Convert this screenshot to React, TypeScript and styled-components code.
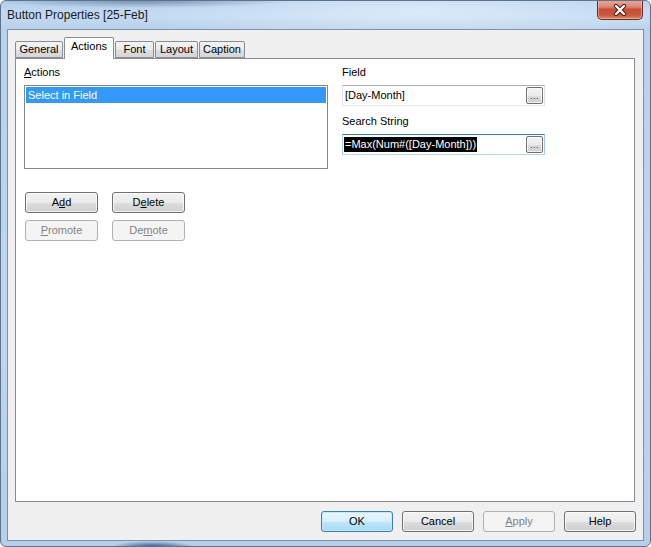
import React from "react";
import styled, { createGlobalStyle } from "styled-components";

const Global = createGlobalStyle`
  html, body { margin: 0; padding: 0; background: #ffffff; }
  body { font-family: "Liberation Sans", Arial, sans-serif; font-size: 11px; color: #000; }
  * { box-sizing: border-box; }
`;

const Window = styled.div`
  width: 651px;
  height: 547px;
  display: flex;
  flex-direction: column;
  border-radius: 6px;
  border: 1px solid #5f7289;
  background:
    radial-gradient(ellipse 150px 7px at 140px 0px, rgba(70, 95, 130, 0.55), transparent),
    radial-gradient(ellipse 42px 6px at 152px 546px, rgba(25, 65, 125, 0.9), transparent),
    radial-gradient(ellipse 300px 30px at 420px 10px, rgba(230, 242, 252, 0.7), transparent),
    linear-gradient(180deg, #b6d0ec 0%, #c2d9f1 14px, #b9d2ec 28px, #bed6ef 60%, #b6cfea 100%);
  overflow: hidden;
`;

const TitleBar = styled.div`
  height: 28px;
  flex: none;
  display: flex;
  justify-content: space-between;
  align-items: flex-start;
  padding-left: 6px;
`;

const Title = styled.div`
  font-family: "Liberation Sans", Arial, sans-serif;
  font-size: 12px;
  color: #1b1b1b;
  padding-top: 7px;
  line-height: 14px;
`;

const CloseButton = styled.div`
  width: 46px;
  height: 20px;
  margin-right: 7px;
  margin-top: -1px;
  border: 1px solid #6b2a20;
  border-top: none;
  border-radius: 0 0 5px 5px;
  background: linear-gradient(180deg, #e9a99a 0%, #d88a78 35%, #c44f38 50%, #c85a3e 80%, #e08a66 100%);
  box-shadow: inset 0 0 0 1px rgba(255, 220, 210, 0.45);
  display: flex;
  align-items: center;
  justify-content: center;
`;

const Client = styled.div`
  flex: 1;
  margin: 0 6px 5px 6px;
  border: 1px solid #7f90a6;
  background: #f0f0f0;
  padding: 7px 7px 8px 7px;
  display: flex;
  flex-direction: column;
`;

const TabStrip = styled.div`
  height: 21px;
  flex: none;
  display: flex;
  align-items: flex-end;
  position: relative;
  z-index: 1;
`;

const Tab = styled.div<{ $active?: boolean; $w: number }>`
  width: ${(p) => p.$w}px;
  height: ${(p) => (p.$active ? 22 : 17)}px;
  margin-bottom: ${(p) => (p.$active ? -1 : 0)}px;
  margin-right: 1px;
  border: 1px solid #898c95;
  border-bottom: ${(p) => (p.$active ? "none" : "1px solid #898c95")};
  border-radius: 2px 2px 0 0;
  background: ${(p) =>
    p.$active ? "#ffffff" : "linear-gradient(180deg, #f3f3f3 0%, #ebebeb 50%, #dedede 51%, #d6d6d6 100%)"};
  display: flex;
  align-items: center;
  justify-content: center;
  padding-bottom: ${(p) => (p.$active ? 4 : 0)}px;
  line-height: 13px;
`;

const Panel = styled.div`
  flex: none;
  height: 444px;
  margin-right: 1px;
  border: 1px solid #898c95;
  background: #ffffff;
  padding: 7px 8px;
  display: grid;
  grid-template-columns: 304px 203px;
  column-gap: 14px;
  align-content: start;
`;

const Column = styled.div`
  display: flex;
  flex-direction: column;
`;

const Label = styled.div<{ $gapTop?: number }>`
  line-height: 13px;
  margin-top: ${(p) => p.$gapTop ?? 0}px;
  margin-bottom: 6px;
`;

const Mn = styled.span`
  text-decoration: underline;
`;

const ListBox = styled.div`
  height: 84px;
  border: 1px solid #828790;
  padding: 1px;
  background: #fff;
`;

const ListItem = styled.div<{ $selected?: boolean }>`
  height: 16px;
  line-height: 16px;
  padding-left: 2px;
  background: ${(p) => (p.$selected ? "#3399ff" : "transparent")};
  color: ${(p) => (p.$selected ? "#ffffff" : "#000")};
`;

const ButtonGrid = styled.div`
  margin-top: 23px;
  margin-left: 1px;
  display: grid;
  grid-template-columns: 73px 73px;
  column-gap: 14px;
  row-gap: 7px;
`;

const PushButton = styled.div<{ $disabled?: boolean; $default?: boolean; $w?: number }>`
  width: ${(p) => p.$w ?? 73}px;
  height: 21px;
  border-radius: 3px;
  border: 1px solid ${(p) => (p.$disabled ? "#adb2b5" : p.$default ? "#3c7fb1" : "#707070")};
  background: ${(p) =>
    p.$disabled
      ? "#f4f4f4"
      : p.$default
      ? "linear-gradient(180deg, #eaf6fd 0%, #d9f0fc 50%, #bee6fd 51%, #a7d9f5 100%)"
      : "linear-gradient(180deg, #f2f2f2 0%, #ebebeb 50%, #dddddd 51%, #cfcfcf 100%)"};
  box-shadow: ${(p) =>
    p.$disabled ? "none" : p.$default ? "inset 0 0 0 1px #c5e9fb" : "inset 0 0 0 1px rgba(255,255,255,0.75)"};
  color: ${(p) => (p.$disabled ? "#838383" : "#000")};
  display: flex;
  align-items: center;
  justify-content: center;
  line-height: 13px;
`;

const TextBox = styled.div<{ $focused?: boolean }>`
  height: 21px;
  border: 1px solid;
  border-color: ${(p) =>
    p.$focused ? "#3d7bad #a4c9e3 #b7d9ed #a4c9e3" : "#abadb3 #dbdfe6 #e3e9ef #e2e3ea"};
  background: #fff;
  display: flex;
  align-items: center;
  justify-content: space-between;
  padding: 0 1px 0 1px;
`;

const TextValue = styled.span<{ $selected?: boolean }>`
  line-height: 15px;
  padding: 0 1px;
  background: ${(p) => (p.$selected ? "#000000" : "transparent")};
  color: ${(p) => (p.$selected ? "#ffffff" : "#000")};
`;

const BrowseButton = styled.div`
  width: 17px;
  height: 17px;
  border: 1px solid #707070;
  border-radius: 2px;
  background: linear-gradient(180deg, #f2f2f2 0%, #ebebeb 50%, #dddddd 51%, #cfcfcf 100%);
  box-shadow: inset 0 0 0 1px rgba(255,255,255,0.7);
  display: flex;
  align-items: flex-end;
  justify-content: center;
  font-size: 9px;
  line-height: 9px;
  letter-spacing: 0.5px;
  color: #202060;
  padding-bottom: 2px;
`;

const Footer = styled.div`
  margin-top: 9px;
  display: flex;
  justify-content: flex-end;
  gap: 9px;
`;

const CloseGlyph = () => (
  <svg width="14" height="12" viewBox="0 0 14 12">
    <path d="M3 2 L11 10 M11 2 L3 10" stroke="#4a150c" strokeWidth="4.2" strokeLinecap="round" />
    <path d="M3 2 L11 10 M11 2 L3 10" stroke="#ffffff" strokeWidth="2.4" strokeLinecap="round" />
  </svg>
);

const tabs = [
  { name: "General", w: 48 },
  { name: "Actions", w: 50, active: true },
  { name: "Font", w: 39 },
  { name: "Layout", w: 43 },
  { name: "Caption", w: 46 },
];

export default function App() {
  return (
    <>
      <Global />
      <Window>
        <TitleBar>
          <Title>Button Properties [25-Feb]</Title>
          <CloseButton>
            <CloseGlyph />
          </CloseButton>
        </TitleBar>
        <Client>
          <TabStrip>
            {tabs.map((t) => (
              <Tab key={t.name} $active={t.active} $w={t.w}>
                {t.name}
              </Tab>
            ))}
          </TabStrip>
          <Panel>
            <Column>
              <Label>
                <Mn>A</Mn>ctions
              </Label>
              <ListBox>
                <ListItem $selected>Select in Field</ListItem>
              </ListBox>
              <ButtonGrid>
                <PushButton>
                  A<Mn>d</Mn>d
                </PushButton>
                <PushButton>
                  D<Mn>e</Mn>lete
                </PushButton>
                <PushButton $disabled>
                  <Mn>P</Mn>romote
                </PushButton>
                <PushButton $disabled>
                  De<Mn>m</Mn>ote
                </PushButton>
              </ButtonGrid>
            </Column>
            <Column>
              <Label>Field</Label>
              <TextBox>
                <TextValue>[Day-Month]</TextValue>
                <BrowseButton>...</BrowseButton>
              </TextBox>
              <Label $gapTop={9}>Search String</Label>
              <TextBox $focused>
                <TextValue $selected>=Max(Num#([Day-Month]))</TextValue>
                <BrowseButton>...</BrowseButton>
              </TextBox>
            </Column>
          </Panel>
          <Footer>
            <PushButton $default $w={72}>OK</PushButton>
            <PushButton $w={72}>Cancel</PushButton>
            <PushButton $disabled $w={72}>
              <Mn>A</Mn>pply
            </PushButton>
            <PushButton $w={72}>Help</PushButton>
          </Footer>
        </Client>
      </Window>
    </>
  );
}
